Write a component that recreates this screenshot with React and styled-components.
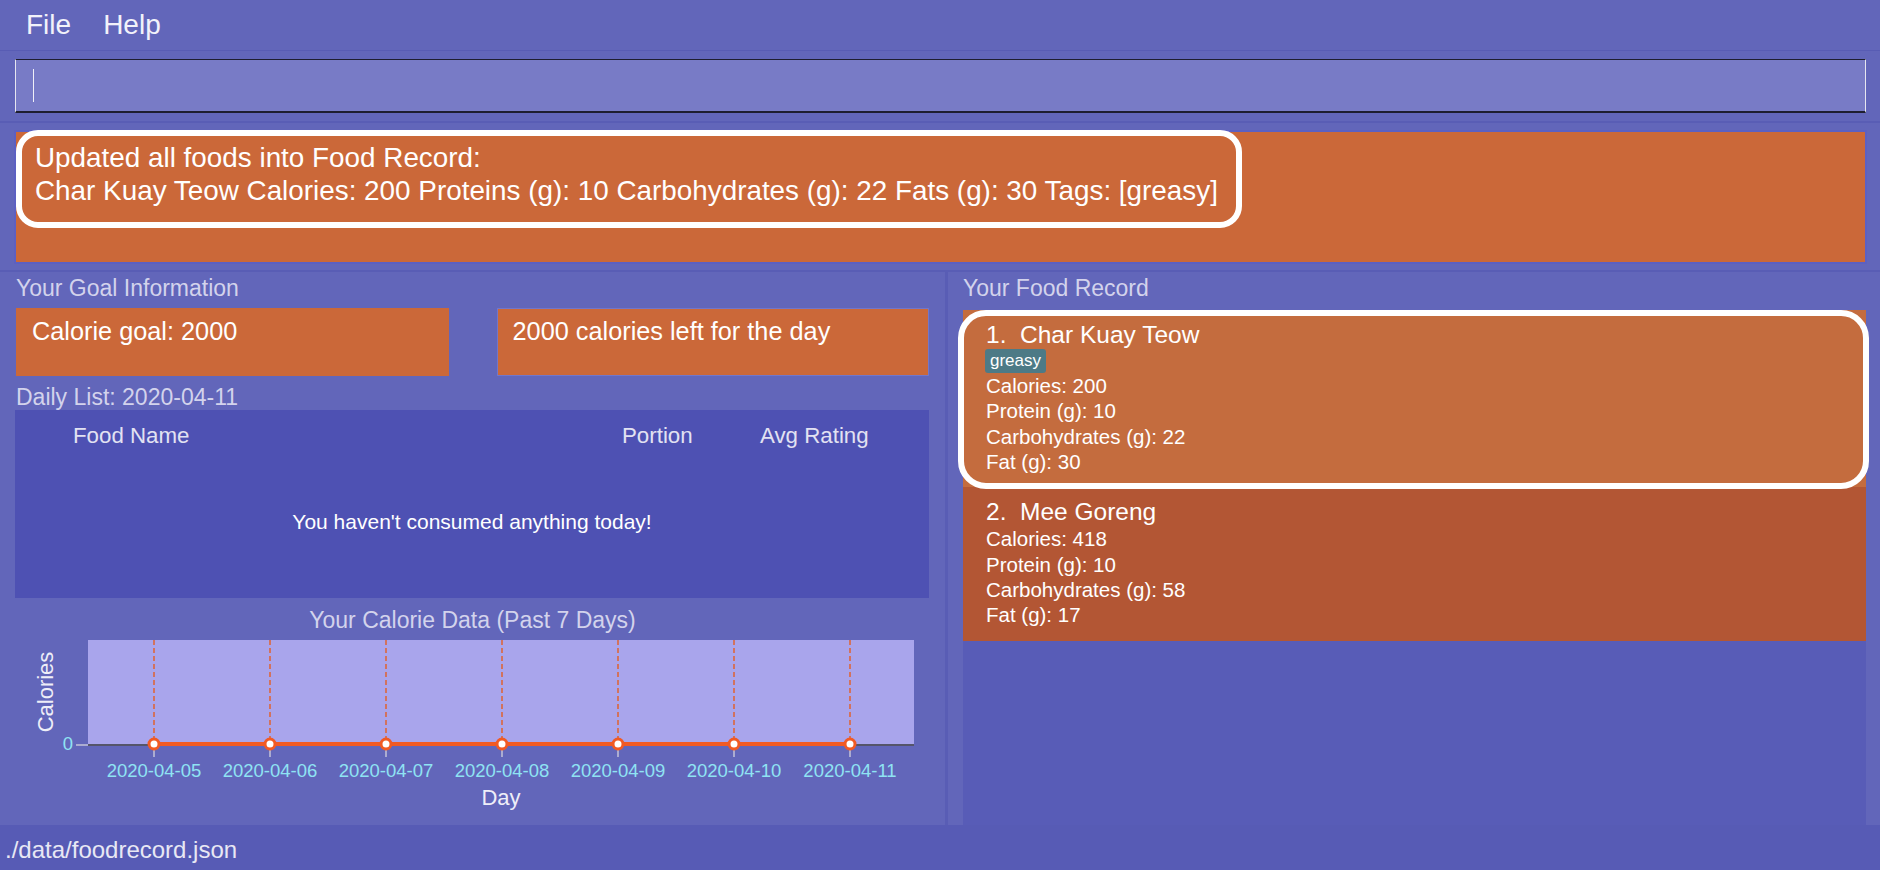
import React from 'react';
import styled, { createGlobalStyle } from 'styled-components';

const GlobalStyle = createGlobalStyle`
  html, body {
    margin: 0;
    padding: 0;
    overflow: hidden;
  }
  body {
    font-family: "Liberation Sans", Arial, sans-serif;
    background: #6266ba;
  }
  * {
    box-sizing: border-box;
  }
`;

const Window = styled.div`
  width: 1880px;
  height: 870px;
  display: flex;
  flex-direction: column;
  background: #6266ba;
  color: #fff;
`;

const MenuBar = styled.div`
  height: 51px;
  display: flex;
  align-items: center;
  gap: 32px;
  padding-left: 26px;
  border-bottom: 1px solid #585cb4;
  font-size: 28px;
  color: #f2f2fa;
`;

const CommandSection = styled.div`
  padding: 8px 14px 8px 15px;
  border-bottom: 2px solid #595db5;
`;

const CommandBox = styled.div`
  height: 54px;
  display: flex;
  align-items: center;
  padding-left: 17px;
  background: #787bc6;
  border-top: 1px solid #1e1e30;
  border-bottom: 2px solid #1e1e30;
  border-left: 1px solid #e6e6f0;
  border-right: 1px solid #e6e6f0;
`;

const Caret = styled.span`
  width: 1px;
  height: 33px;
  background: #f0f0f8;
`;

const ResultSection = styled.div`
  padding: 7px 13px 6px 14px;
  border-bottom: 2px solid #595db5;
`;

const ResultBox = styled.div`
  height: 134px;
  background: #cb6839;
  border: 2px solid #5c60c2;
`;

const ResultText = styled.div`
  display: inline-block;
  margin-top: -2px;
  padding: 5px 18px 15px 13px;
  border: 6px solid #fff;
  border-radius: 22px;
  font-size: 27.85px;
  line-height: 33px;
  white-space: nowrap;
`;

const Main = styled.div`
  flex: 1;
  min-height: 0;
  display: flex;
`;

const LeftPanel = styled.div`
  width: 945px;
  padding: 2px 16px 0 16px;
  display: flex;
  flex-direction: column;
`;

const RightPanel = styled.div`
  flex: 1;
  padding: 2px 14px 0 15px;
  display: flex;
  flex-direction: column;
  border-left: 3px solid #595db5;
`;

const SectionLabel = styled.div`
  font-size: 23px;
  line-height: ${(p) => p.$lh || 28}px;
  margin-top: ${(p) => p.$mt || 0}px;
  color: #d3d3ec;
  white-space: nowrap;
`;

const GoalRow = styled.div`
  display: grid;
  grid-template-columns: 1fr 1fr;
  gap: 48px;
  height: 68px;
  margin-top: 6px;
`;

const GoalBox = styled.div`
  background: #cb6839;
  padding: 7px 15px;
  border: 1px solid ${(p) => (p.$outlined ? '#7276ca' : '#cb6839')};
  font-size: 25.3px;
  line-height: 30px;
  white-space: nowrap;
`;

const Table = styled.div`
  height: 188px;
  margin-left: -1px;
  display: flex;
  flex-direction: column;
  background: #4e51b3;
`;

const TableHeader = styled.div`
  display: grid;
  grid-template-columns: 607px 138px 1fr;
  padding-top: 13px;
  font-size: 22.3px;
  line-height: 26px;
  color: #e2e2f2;
`;

const HeaderCell = styled.div`
  padding-left: ${(p) => p.$indent || 0}px;
  white-space: nowrap;
`;

const EmptyMessage = styled.div`
  flex: 1;
  display: flex;
  align-items: center;
  justify-content: center;
  padding-bottom: 3px;
  font-size: 21px;
  line-height: 24px;
`;

const ChartTitle = styled.div`
  margin-top: 8px;
  text-align: center;
  font-size: 23px;
  line-height: 28px;
  color: #d3d3ec;
`;

const ChartSvg = styled.svg`
  display: block;
  margin-top: -1px;
  font-family: "Liberation Sans", Arial, sans-serif;
`;

const AxisTitle = styled.div`
  padding-left: 57px;
  text-align: center;
  font-size: 22px;
  line-height: 28px;
  color: #eeeef8;
`;

const FoodList = styled.div`
  flex: 1;
  margin-top: 8px;
  background: #585cb7;
`;

const FoodCard = styled.div`
  position: relative;
  padding: 11px 0 13px 23px;
  background: ${(p) => (p.$selected ? '#c46c3e' : '#b35634')};
`;

const CardHighlight = styled.div`
  position: absolute;
  left: -5px;
  right: -3px;
  top: 0;
  bottom: -2px;
  z-index: 1;
  border: 6px solid #fff;
  border-radius: 28px;
  pointer-events: none;
`;

const CardTitle = styled.div`
  font-size: 24.5px;
  line-height: 28px;
  white-space: pre;
`;

const TagRow = styled.div`
  height: 24px;
  display: flex;
  margin-left: -1px;
`;

const Tag = styled.span`
  padding: 0 5px;
  border-radius: 3px;
  background: #4d7a86;
  font-size: 17px;
  line-height: 24px;
`;

const Detail = styled.div`
  font-size: 20.5px;
  line-height: 25.33px;
`;

const StatusBar = styled.div`
  height: 45px;
  padding-left: 5px;
  background: #575bb5;
  font-size: 24px;
  line-height: 50px;
  color: #e8e8f4;
  overflow: hidden;
`;

const dates = ['2020-04-05', '2020-04-06', '2020-04-07', '2020-04-08', '2020-04-09', '2020-04-10', '2020-04-11'];

const foods = [
  { name: 'Char Kuay Teow', tags: ['greasy'], calories: 200, protein: 10, carbs: 22, fat: 30 },
  { name: 'Mee Goreng', tags: [], calories: 418, protein: 10, carbs: 58, fat: 17 },
];

const X0 = 138;
const STEP = 116;
const AXIS_Y = 112;

function CalorieChart() {
  const xs = dates.map((_, i) => X0 + STEP * i);
  return (
    <ChartSvg width="913" height="151" viewBox="0 0 913 151">
      <rect x="72" y="7" width="826" height="105" fill="#a9a5ec" />
      {xs.map((x) => (
        <line key={`d${x}`} x1={x} y1="7" x2={x} y2={AXIS_Y} stroke="#e0622f" strokeWidth="1.5" strokeDasharray="5 3" />
      ))}
      <line x1="60" y1={AXIS_Y} x2="72" y2={AXIS_Y} stroke="#c4c4d8" strokeWidth="1.5" />
      <line x1="72" y1={AXIS_Y} x2="898" y2={AXIS_Y} stroke="#55556a" strokeWidth="2" />
      {xs.map((x) => (
        <line key={`t${x}`} x1={x} y1={AXIS_Y} x2={x} y2={AXIS_Y + 12} stroke="#c4c4d8" strokeWidth="1.5" />
      ))}
      <line x1={xs[0]} y1={AXIS_Y - 1} x2={xs[xs.length - 1]} y2={AXIS_Y - 1} stroke="#f15a24" strokeWidth="4" />
      {xs.map((x) => (
        <circle key={`c${x}`} cx={x} cy={AXIS_Y - 1} r="5" fill="#fff" stroke="#f15a24" strokeWidth="3" />
      ))}
      <text x="57" y="117" textAnchor="end" fontSize="18.5" fill="#8fe3f3">0</text>
      {xs.map((x, i) => (
        <text key={`l${x}`} x={x} y="144" textAnchor="middle" fontSize="18.5" fill="#8fe3f3">
          {dates[i]}
        </text>
      ))}
      <text transform="translate(37 59) rotate(-90)" textAnchor="middle" fontSize="22" fill="#eeeef8">
        Calories
      </text>
    </ChartSvg>
  );
}

function App() {
  return (
    <Window>
      <GlobalStyle />

      {/* Menu */}
      <MenuBar>
        <span>File</span>
        <span>Help</span>
      </MenuBar>

      {/* Command input */}
      <CommandSection>
        <CommandBox>
          <Caret />
        </CommandBox>
      </CommandSection>

      {/* Result display */}
      <ResultSection>
        <ResultBox>
          <ResultText>
            <div>Updated all foods into Food Record:</div>
            <div>Char Kuay Teow Calories: 200 Proteins (g): 10 Carbohydrates (g): 22 Fats (g): 30 Tags: [greasy]</div>
          </ResultText>
        </ResultBox>
      </ResultSection>

      <Main>
        <LeftPanel>
          <SectionLabel>Your Goal Information</SectionLabel>
          <GoalRow>
            <GoalBox>Calorie goal: 2000</GoalBox>
            <GoalBox $outlined>2000 calories left for the day</GoalBox>
          </GoalRow>

          <SectionLabel $mt={8} $lh={26}>Daily List: 2020-04-11</SectionLabel>
          <Table>
            <TableHeader>
              <HeaderCell $indent={58}>Food Name</HeaderCell>
              <HeaderCell>Portion</HeaderCell>
              <HeaderCell>Avg Rating</HeaderCell>
            </TableHeader>
            <EmptyMessage>You haven't consumed anything today!</EmptyMessage>
          </Table>

          <ChartTitle>Your Calorie Data (Past 7 Days)</ChartTitle>
          <CalorieChart />
          <AxisTitle>Day</AxisTitle>
        </LeftPanel>

        <RightPanel>
          <SectionLabel>Your Food Record</SectionLabel>
          <FoodList>
            {foods.map((food, index) => (
              <FoodCard key={food.name} $selected={index === 0}>
                {index === 0 && <CardHighlight />}
                <CardTitle>{`${index + 1}.  ${food.name}`}</CardTitle>
                {food.tags.length > 0 && (
                  <TagRow>
                    {food.tags.map((tag) => (
                      <Tag key={tag}>{tag}</Tag>
                    ))}
                  </TagRow>
                )}
                <Detail>Calories: {food.calories}</Detail>
                <Detail>Protein (g): {food.protein}</Detail>
                <Detail>Carbohydrates (g): {food.carbs}</Detail>
                <Detail>Fat (g): {food.fat}</Detail>
              </FoodCard>
            ))}
          </FoodList>
        </RightPanel>
      </Main>

      <StatusBar>./data/foodrecord.json</StatusBar>
    </Window>
  );
}

export default App;
